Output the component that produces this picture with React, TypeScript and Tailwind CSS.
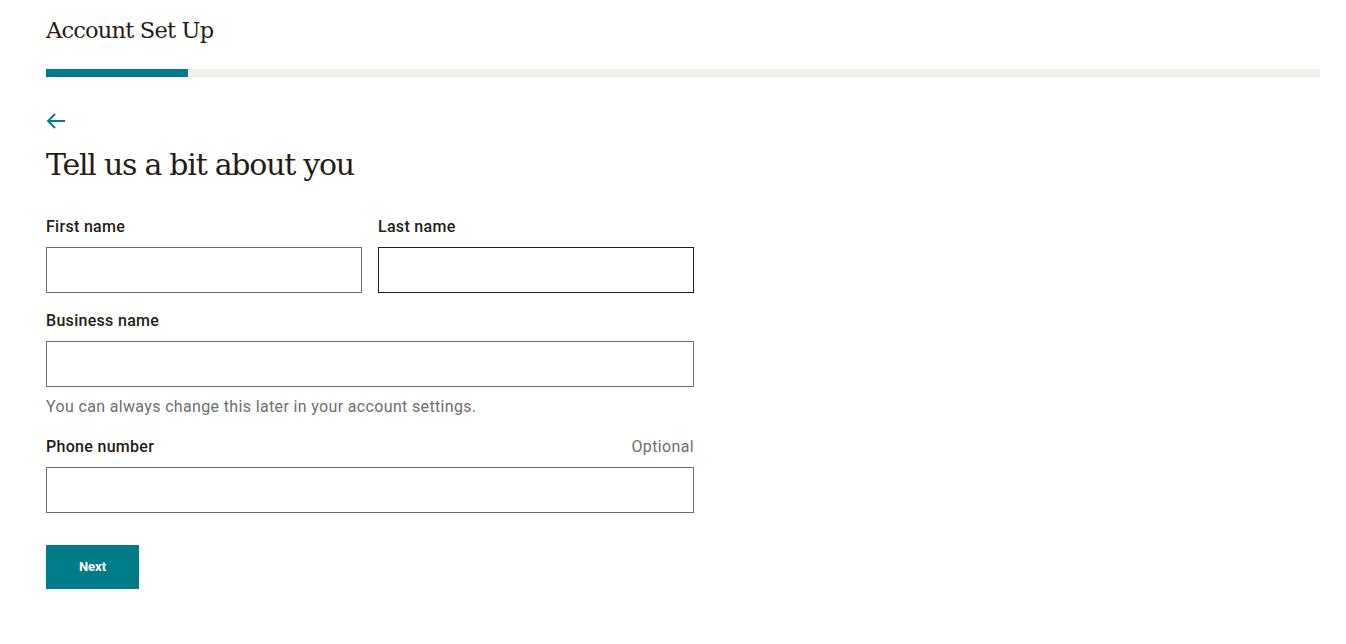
import React from "react";

const serif = { fontFamily: '"DejaVu Serif", "Liberation Serif", serif' };

function Field({ label, optional, focused }: { label: string; optional?: boolean; focused?: boolean }) {
  return (
    <div className="flex flex-col">
      <div className="flex h-[20px] items-center justify-between">
        <label className="text-[16px] font-medium tracking-[0.3px] text-[#241c15]">{label}</label>
        {optional && <span className="text-[16px] tracking-[0.35px] text-[#6e6e6e]">Optional</span>}
      </div>
      <input
        className={
          focused
            ? "mt-[10px] h-[46px] w-full border border-[#241c15] bg-white px-3 outline-none"
            : "mt-[10px] h-[46px] w-full border border-[#6e6e6e] bg-white px-3 outline-none"
        }
      />
    </div>
  );
}

export default function App() {
  return (
    <div
      className="min-h-[644px] bg-white pl-[46px] pr-[26px] text-[#241c15]"
      style={{ fontFamily: 'Roboto, "Liberation Sans", sans-serif' }}
    >
      <h1 className="pt-[14px] text-[22.5px] leading-[32px] tracking-[-0.8px]" style={serif}>
        Account Set Up
      </h1>

      <div className="mt-[23px] flex h-[8px] w-full bg-[#efeeea]">
        <div className="h-full w-[142px] bg-[#007c89]" />
      </div>

      <div className="w-[648px]">
        <button className="mt-[35px] flex h-[18px] w-[22px] items-center text-[#007c89]" aria-label="Back">
          <svg width="20" height="16" viewBox="0 0 20 16" fill="none" stroke="currentColor" strokeWidth="1.8">
            <path d="M19 8H2M9 1L2 8l7 7" />
          </svg>
        </button>

        <h2 className="mt-[15px] text-[30px] leading-[40px] tracking-[-1.25px]" style={serif}>
          Tell us a bit about you
        </h2>

        <div className="mt-[32px] grid grid-cols-2 gap-x-4">
          <Field label="First name" />
          <Field label="Last name" focused />
        </div>

        <div className="mt-[18px]">
          <Field label="Business name" />
          <p className="mt-[10px] text-[16px] leading-[20px] tracking-[0.35px] text-[#6e6e6e]">
            You can always change this later in your account settings.
          </p>
        </div>

        <div className="mt-[20px]">
          <Field label="Phone number" optional />
        </div>

        <button className="mt-[32px] h-[44px] w-[93px] bg-[#007c89] text-[13px] font-bold text-white">
          Next
        </button>
      </div>
    </div>
  );
}
